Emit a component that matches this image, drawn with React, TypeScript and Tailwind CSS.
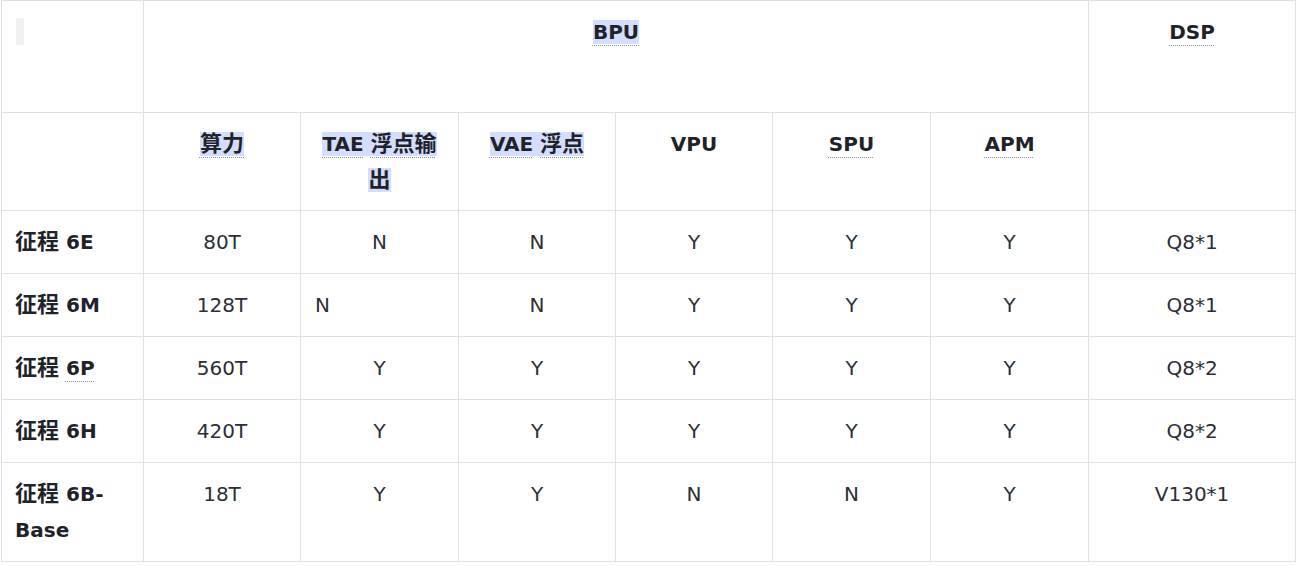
import React from "react";

type Row = {
  name: React.ReactNode;
  cells: string[];
  leftAlignIdx?: number;
};

const Dotted = ({ children }: { children: React.ReactNode }) => (
  <span className="underline decoration-dotted decoration-[#8a8f99] underline-offset-[6px] decoration-1">{children}</span>
);

const Mark = ({ children }: { children: React.ReactNode }) => <span className="bg-[#d3deff]">{children}</span>;

// CJK glyphs render a touch larger than the latin ones in the reference
const Cjk = ({ children }: { children: React.ReactNode }) => <span className="text-[22px] leading-[20px]">{children}</span>;

const rows: Row[] = [
  { name: <><Cjk>征程</Cjk> 6E</>, cells: ["80T", "N", "N", "Y", "Y", "Y", "Q8*1"] },
  { name: <><Cjk>征程</Cjk> 6M</>, cells: ["128T", "N", "N", "Y", "Y", "Y", "Q8*1"], leftAlignIdx: 1 },
  {
    name: (
      <>
        <Cjk>征程</Cjk> <Dotted>6P</Dotted>
      </>
    ),
    cells: ["560T", "Y", "Y", "Y", "Y", "Y", "Q8*2"],
  },
  { name: <><Cjk>征程</Cjk> 6H</>, cells: ["420T", "Y", "Y", "Y", "Y", "Y", "Q8*2"] },
  { name: <><Cjk>征程</Cjk> 6B-Base</>, cells: ["18T", "Y", "Y", "N", "N", "Y", "V130*1"] },
];

const App = () => {
  const cell = "border border-[#dfe1e5] px-[14px] py-[13px] align-top";
  const sub = `${cell} pb-[12px] text-center font-bold`;

  return (
    <main className="bg-white min-h-screen pl-[1px] text-[20px] leading-[36px] text-[#1f2329] font-['DejaVu_Sans','Noto_Sans_CJK_SC',sans-serif]">
      <table className="border-collapse table-fixed w-[1294px]">
        <colgroup>
          <col className="w-[142px]" />
          <col className="w-[157px]" />
          <col className="w-[158px]" />
          <col className="w-[157px]" />
          <col className="w-[157px]" />
          <col className="w-[158px]" />
          <col className="w-[158px]" />
          <col className="w-[207px]" />
        </colgroup>
        <thead>
          {/* Top header */}
          <tr className="h-[112px]">
            <th className={`${cell} text-left`}>
              <span className="inline-block w-[8px] h-[27px] bg-[#f0f1f3] mt-[4px] align-top"></span>
            </th>
            <th colSpan={6} className={`${cell} text-center font-bold`}>
              <Mark>
                <Dotted>BPU</Dotted>
              </Mark>
            </th>
            <th className={`${cell} text-center font-bold`}>
              <Dotted>DSP</Dotted>
            </th>
          </tr>
          {/* Sub header */}
          <tr className="h-[97px]">
            <th className={sub}></th>
            <th className={sub}>
              <Mark>
                <Dotted>
                  <Cjk>算力</Cjk>
                </Dotted>
              </Mark>
            </th>
            <th className={sub}>
              <Mark>
                <Dotted>TAE</Dotted>{" "}
                <Dotted>
                  <Cjk>浮点输</Cjk>
                </Dotted>
                <Cjk>出</Cjk>
              </Mark>
            </th>
            <th className={sub}>
              <Mark>
                <Dotted>VAE</Dotted>{" "}
                <Dotted>
                  <Cjk>浮点</Cjk>
                </Dotted>
              </Mark>
            </th>
            <th className={sub}>VPU</th>
            <th className={sub}>
              <Dotted>SPU</Dotted>
            </th>
            <th className={sub}>
              <Dotted>APM</Dotted>
            </th>
            <th className={sub}></th>
          </tr>
        </thead>
        <tbody>
          {rows.map((row, i) => (
            <tr key={i}>
              <td className={`${cell} pl-[13px] font-bold text-left`}>{row.name}</td>
              {row.cells.map((c, j) => (
                <td key={j} className={`${cell} text-[#2b2f36] ${row.leftAlignIdx === j ? "text-left" : "text-center"}`}>
                  {c}
                </td>
              ))}
            </tr>
          ))}
        </tbody>
      </table>
    </main>
  );
};

export default App;
